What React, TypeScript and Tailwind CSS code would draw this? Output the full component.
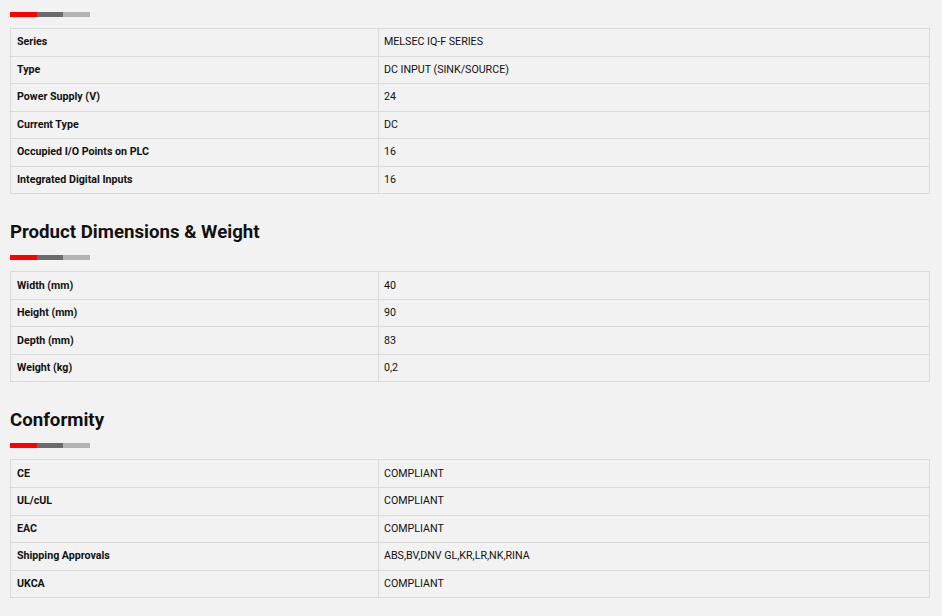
import React from "react";

type Row = [string, string];

const general: Row[] = [
  ["Series", "MELSEC IQ-F SERIES"],
  ["Type", "DC INPUT (SINK/SOURCE)"],
  ["Power Supply (V)", "24"],
  ["Current Type", "DC"],
  ["Occupied I/O Points on PLC", "16"],
  ["Integrated Digital Inputs", "16"],
];

const dimensions: Row[] = [
  ["Width (mm)", "40"],
  ["Height (mm)", "90"],
  ["Depth (mm)", "83"],
  ["Weight (kg)", "0,2"],
];

const conformity: Row[] = [
  ["CE", "COMPLIANT"],
  ["UL/cUL", "COMPLIANT"],
  ["EAC", "COMPLIANT"],
  ["Shipping Approvals", "ABS,BV,DNV GL,KR,LR,NK,RINA"],
  ["UKCA", "COMPLIANT"],
];

const Divider: React.FC = () => (
  <div className="flex h-[5px] w-[80px]">
    <div className="w-[27px] bg-[#ff0000]" />
    <div className="w-[26px] bg-[#6b6b6b]" />
    <div className="w-[27px] bg-[#b3b3b3]" />
  </div>
);

const SpecTable: React.FC<{ rows: Row[] }> = ({ rows }) => (
  <table className="mt-[11px] w-[920px] border-collapse text-[10.67px] text-[#111]">
    <tbody>
      {rows.map(([k, v]) => (
        <tr key={k} className="h-[27.55px]">
          <td className="w-[368px] border border-[#dadada] px-[6px] font-bold">{k}</td>
          <td className="border border-[#dadada] pl-[5px] pr-[6px]">{v}</td>
        </tr>
      ))}
    </tbody>
  </table>
);

const Heading: React.FC<{ children: React.ReactNode }> = ({ children }) => (
  <h2 className="mt-[26px] mb-[11px] text-[18.67px] leading-[24px] font-bold text-[#111]">
    {children}
  </h2>
);

const App: React.FC = () => {
  return (
    <div
      className="min-h-[616px] bg-[#f2f2f2] px-[10px] pt-[12px]"
      style={{ fontFamily: "Roboto, 'Liberation Sans', sans-serif" }}
    >
      <Divider />
      <SpecTable rows={general} />
      <Heading>Product Dimensions &amp; Weight</Heading>
      <Divider />
      <SpecTable rows={dimensions} />
      <Heading>Conformity</Heading>
      <Divider />
      <SpecTable rows={conformity} />
    </div>
  );
};

export default App;
